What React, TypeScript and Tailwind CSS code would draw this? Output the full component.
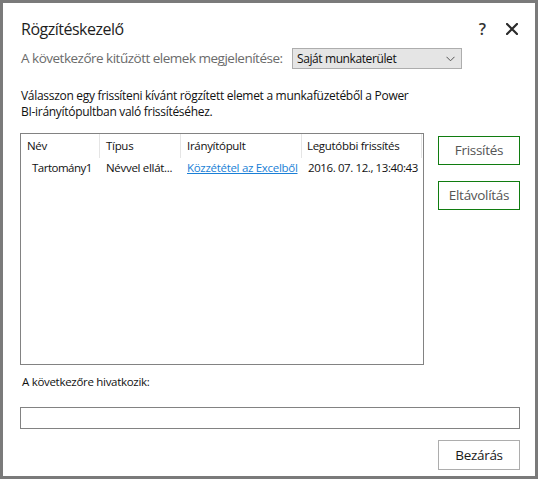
import React from "react";

const font = { fontFamily: '"Open Sans", "Noto Sans", sans-serif' };

export default function App() {
  return (
    <div
      className="w-[538px] h-[479px] box-border border-[3px] border-[#7a7a7a] bg-white flex flex-col pl-[17px] pr-[15px] text-[#1a1a1a]"
      style={font}
    >
      {/* title */}
      <div className="flex items-center justify-between h-[22px] mt-[15px]">
        <div className="text-[16px] leading-[22px] tracking-[-0.5px] text-[#1e1e1e] pl-[1px]">Rögzítéskezelő</div>
        <div className="flex items-center gap-[20px] pr-[2px]">
          <span className="text-[16px] leading-[22px] font-semibold text-[#333]">?</span>
          <svg width="12" height="12" viewBox="0 0 12 12">
            <path d="M1 1 L11 11 M11 1 L1 11" stroke="#2b2b2b" strokeWidth="2.2" strokeLinecap="square" />
          </svg>
        </div>
      </div>

      {/* filter row */}
      <div className="flex items-center mt-[8px] h-[21px]">
        <span className="text-[13.5px] leading-[21px] tracking-[-0.5px] text-[#6b6b6b] pl-[1px]">
          A következőre kitűzött elemek megjelenítése:
        </span>
        <div className="ml-auto mr-[58px] w-[170px] h-[21px] box-border border border-[#adadad] bg-[#e5e5e5] flex items-center pl-[4px] pr-[6px]">
          <span className="text-[12px] tracking-[-0.4px] text-[#111] leading-[19px]">Saját munkaterület</span>
          <svg className="ml-auto" width="9" height="6" viewBox="0 0 9 6">
            <path d="M0.5 0.8 L4.5 4.8 L8.5 0.8" stroke="#555" strokeWidth="1" fill="none" />
          </svg>
        </div>
      </div>

      {/* paragraph */}
      <div className="mt-[19px] pl-[1px] text-[12px] leading-[16px] tracking-[-0.3px] text-[#111]">
        Válasszon egy frissíteni kívánt rögzített elemet a munkafüzetéből a Power
        <br />
        BI-irányítópultban való frissítéséhez.
      </div>

      {/* table + buttons */}
      <div className="flex mt-[13px]">
        <div className="w-[404px] h-[232px] box-border border border-[#828282]">
          <div className="grid grid-cols-[79px_81px_121px_120px] h-[24px] text-[11.5px] tracking-[-0.3px] leading-[24px] text-[#111]">
            <div className="pl-[6px] border-r border-[#e5e5e5]">Név</div>
            <div className="pl-[6px] border-r border-[#e5e5e5]">Típus</div>
            <div className="pl-[6px] border-r border-[#e5e5e5]">Irányítópult</div>
            <div className="pl-[5px] border-r border-[#e5e5e5]">Legutóbbi frissítés</div>
          </div>
          <div className="grid grid-cols-[79px_81px_121px_120px] h-[20px] text-[11.5px] tracking-[-0.3px] leading-[20px] text-[#111]">
            <div className="pl-[11px] tracking-[-0.5px]">Tartomány1</div>
            <div className="pl-[6px] whitespace-nowrap">Névvel ellát...</div>
            <div className="pl-[6px] whitespace-nowrap">
              <span className="text-[#1a7fd6] underline">Közzététel az Excelből</span>
            </div>
            <div className="pl-[6px] whitespace-nowrap tracking-[-0.4px]">2016. 07. 12., 13:40:43</div>
          </div>
        </div>
        <div className="ml-auto flex flex-col gap-[16px] pt-[3px]">
          <button className="w-[82px] h-[29px] box-border border border-[#107c10] bg-white text-[13.5px] tracking-[-0.3px] text-[#555]">
            Frissítés
          </button>
          <button className="w-[82px] h-[29px] box-border border border-[#107c10] bg-white text-[13.5px] tracking-[-0.3px] text-[#555]">
            Eltávolítás
          </button>
        </div>
      </div>

      {/* reference label */}
      <div className="mt-[8px] pl-[2px] h-[18px] text-[11.5px] leading-[18px] tracking-[-0.3px] text-[#111]">
        A következőre hivatkozik:
      </div>

      <div className="mt-[16px] w-[500px] h-[22px] box-border border border-[#828282] bg-white" />

      <div className="flex justify-end mt-[11px]">
        <button className="w-[82px] h-[30px] box-border border border-[#adadad] bg-white text-[13.5px] tracking-[-0.3px] text-[#1a1a1a]">
          Bezárás
        </button>
      </div>
    </div>
  );
}
